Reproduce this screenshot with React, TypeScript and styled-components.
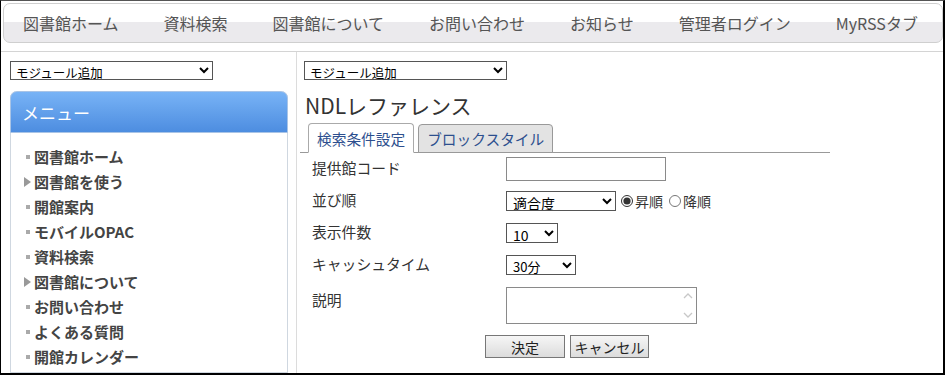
import React from "react";
import styled, { createGlobalStyle } from "styled-components";

const Global = createGlobalStyle`
  html, body { margin: 0; padding: 0; background: #fff; overflow: hidden; }
  body { font-family: "Noto Sans CJK JP", "Noto Sans", sans-serif; }
  * { box-sizing: border-box; }
`;

const Frame = styled.div`
  width: 945px;
  height: 375px;
  border-top: 1px solid #555;
  border-left: 1px solid #000;
  border-right: 2px solid #000;
  border-bottom: 2px solid #000;
  overflow: hidden;
  display: flex;
  flex-direction: column;
`;

const NavBar = styled.nav`
  margin: 2px 0 0 2px;
  height: 40px;
  border: 1px solid #cfcfcf;
  border-radius: 7px;
  background: linear-gradient(#ffffff 0, #ffffff 48%, #ebeaed 48%, #ebeaed 100%);
  display: flex;
  align-items: center;
  padding-left: 19px;
  gap: 45px;
  flex-shrink: 0;
`;

const NavItem = styled.a`
  font-size: 16px;
  color: #555;
  text-decoration: none;
  white-space: nowrap;
`;

const Main = styled.div`
  margin-top: 8px;
  border-top: 1px solid #d4d4d4;
  display: flex;
  flex: 1;
  min-height: 0;
`;

const SideColumn = styled.aside`
  width: 296px;
  flex-shrink: 0;
  border-right: 1px solid #dcdcdc;
  padding: 9px 0 0 9px;
  display: flex;
  flex-direction: column;
`;

const ContentColumn = styled.section`
  flex: 1;
  padding: 9px 0 0 3px;
  display: flex;
  flex-direction: column;
`;

const ModuleSelect = styled.select<{ $ml?: number }>`
  width: 203px;
  height: 19px;
  margin-left: ${(p) => p.$ml ?? 0}px;
  font-family: "Noto Sans CJK JP", sans-serif;
  font-size: 12.5px;
  line-height: 15px;
  color: #000;
  border: 1px solid #555;
  border-radius: 0;
  background: #fff;
  padding: 0 1px;
`;

const MenuBox = styled.div`
  margin-top: 11px;
  width: 278px;
  flex: 1;
  border: 1px solid #cfd7e0;
  border-top: none;
  border-radius: 7px 7px 0 0;
  display: flex;
  flex-direction: column;
`;

const MenuHeader = styled.div`
  height: 42px;
  margin: 0 -1px;
  border-radius: 7px 7px 0 0;
  background: linear-gradient(#78b3f6, #4d8de0);
  border: 1px solid #a9c4e6;
  color: #fff;
  font-size: 17px;
  display: flex;
  align-items: center;
  padding-left: 11px;
`;

const MenuList = styled.ul`
  list-style: none;
  margin: 0;
  padding: 11px 0 0 11px;
`;

const MenuItem = styled.li`
  height: 25px;
  display: flex;
  align-items: center;
  font-size: 15px;
  font-weight: bold;
  color: #444;
`;

const Marker = styled.span<{ $arrow?: boolean }>`
  width: 12px;
  display: inline-flex;
  align-items: center;
  justify-content: ${(p) => (p.$arrow ? "flex-start" : "center")};
  padding-left: ${(p) => (p.$arrow ? 2 : 0)}px;
  &::before {
    content: "";
    display: block;
    ${(p) =>
      p.$arrow
        ? `width: 0; height: 0; border-top: 5px solid transparent; border-bottom: 5px solid transparent; border-left: 7px solid #999;`
        : `width: 4px; height: 4px; background: #aaa;`}
  }
`;

const Title = styled.h2`
  margin: 11px 0 4px 5px;
  font-size: 21px;
  line-height: 28px;
  font-weight: normal;
  color: #333;
`;

const TabBar = styled.div`
  width: 530px;
  height: 30px;
  border-bottom: 1px solid #999;
  display: flex;
  align-items: flex-end;
  gap: 4px;
  padding-left: 8px;
`;

const Tab = styled.div<{ $active?: boolean }>`
  height: ${(p) => (p.$active ? 30 : 29)}px;
  margin-bottom: -1px;
  padding: 0 8px;
  border: 1px solid ${(p) => (p.$active ? "#aaa" : "#999")};
  border-bottom: 1px solid ${(p) => (p.$active ? "#fff" : "#999")};
  border-radius: 4px 4px 0 0;
  background: ${(p) => (p.$active ? "#fff" : "#e3e3e3")};
  color: #2d4f8e;
  font-size: 14.7px;
  display: flex;
  align-items: center;
  white-space: nowrap;
`;

const Form = styled.form`
  width: 530px;
  padding-left: 12px;
  display: flex;
  flex-direction: column;
`;

const Row = styled.div<{ $top?: boolean }>`
  height: ${(p) => (p.$top ? 54 : 32)}px;
  display: flex;
  align-items: ${(p) => (p.$top ? "flex-start" : "center")};
  padding-top: ${(p) => (p.$top ? 6 : 0)}px;
`;

const Label = styled.label<{ $pt?: number }>`
  width: 194px;
  flex-shrink: 0;
  font-size: 14.8px;
  color: #333;
  padding-top: ${(p) => p.$pt ?? 0}px;
  padding-bottom: ${(p) => (p.$pt ? 0 : 4)}px;
`;

const TextInput = styled.input`
  width: 160px;
  height: 24px;
  border: 1px solid #8a8a8a;
  border-radius: 0;
  padding: 0 3px;
`;

const FieldSelect = styled.select<{ $w: number; $fs: number }>`
  width: ${(p) => p.$w}px;
  height: 20px;
  font-family: "Noto Sans CJK JP", sans-serif;
  font-size: ${(p) => p.$fs}px;
  color: #000;
  border: 1px solid #555;
  border-radius: 0;
  background: #fff;
  padding: 0 2px;
`;

const RadioGroup = styled.div`
  display: flex;
  align-items: center;
  margin-left: 3px;
  font-size: 14px;
  color: #333;
`;

const Radio = styled.input`
  width: 12px;
  height: 12px;
  margin: 0 2px 0 2px;
  accent-color: #333;
`;

const RadioText = styled.span`
  margin-right: 4px;
`;

const TextAreaWrap = styled.div`
  position: relative;
  width: 191px;
  height: 37px;
`;

const TextArea = styled.textarea`
  width: 191px;
  height: 37px;
  border: 1px solid #8a8a8a;
  border-radius: 0;
  resize: none;
  overflow-y: scroll;
  display: block;
  padding-right: 18px;
`;

const ScrollArrows = styled.svg`
  position: absolute;
  right: 2px;
  top: 3px;
  pointer-events: none;
`;

const ButtonRow = styled.div`
  display: flex;
  justify-content: center;
  gap: 5px;
  padding-right: 8px;
`;

const Button = styled.button<{ $w: number }>`
  width: ${(p) => p.$w}px;
  height: 23px;
  font-family: "Noto Sans CJK JP", sans-serif;
  font-size: 14px;
  color: #222;
  border: 1px solid #777;
  border-radius: 0;
  background: linear-gradient(#f6f6f6, #dcdcdc);
  padding: 0;
`;

const navItems = ["図書館ホーム", "資料検索", "図書館について", "お問い合わせ", "お知らせ", "管理者ログイン", "MyRSSタブ"];

const menuItems: { label: string; arrow?: boolean }[] = [
  { label: "図書館ホーム" },
  { label: "図書館を使う", arrow: true },
  { label: "開館案内" },
  { label: "モバイルOPAC" },
  { label: "資料検索" },
  { label: "図書館について", arrow: true },
  { label: "お問い合わせ" },
  { label: "よくある質問" },
  { label: "開館カレンダー" },
];

export default function App() {
  return (
    <>
      <Global />
      <Frame>
        <NavBar>
          {navItems.map((n) => (
            <NavItem key={n}>{n}</NavItem>
          ))}
        </NavBar>
        <Main>
          <SideColumn>
            <ModuleSelect defaultValue="a">
              <option value="a">モジュール追加</option>
            </ModuleSelect>
            <MenuBox>
              <MenuHeader>メニュー</MenuHeader>
              <MenuList>
                {menuItems.map((m) => (
                  <MenuItem key={m.label}>
                    <Marker $arrow={m.arrow} />
                    {m.label}
                  </MenuItem>
                ))}
              </MenuList>
            </MenuBox>
          </SideColumn>
          <ContentColumn>
            <ModuleSelect $ml={4} defaultValue="a">
              <option value="a">モジュール追加</option>
            </ModuleSelect>
            <Title>NDLレファレンス</Title>
            <TabBar>
              <Tab $active>検索条件設定</Tab>
              <Tab>ブロックスタイル</Tab>
            </TabBar>
            <Form onSubmit={(e) => e.preventDefault()}>
              <Row>
                <Label>提供館コード</Label>
                <TextInput type="text" />
              </Row>
              <Row>
                <Label>並び順</Label>
                <FieldSelect $w={110} $fs={14} defaultValue="a">
                  <option value="a">適合度</option>
                </FieldSelect>
                <RadioGroup>
                  <Radio type="radio" name="order" defaultChecked />
                  <RadioText>昇順</RadioText>
                  <Radio type="radio" name="order" />
                  <RadioText>降順</RadioText>
                </RadioGroup>
              </Row>
              <Row>
                <Label>表示件数</Label>
                <FieldSelect $w={52} $fs={14} defaultValue="10">
                  <option value="10">10</option>
                </FieldSelect>
              </Row>
              <Row>
                <Label>キャッシュタイム</Label>
                <FieldSelect $w={70} $fs={13} defaultValue="30">
                  <option value="30">30分</option>
                </FieldSelect>
              </Row>
              <Row $top>
                <Label $pt={2}>説明</Label>
                <TextAreaWrap>
                  <TextArea />
                  <ScrollArrows width="14" height="31" viewBox="0 0 14 31">
                    <path d="M3 8 L7 4 L11 8" fill="none" stroke="#c8c8c8" strokeWidth="1.3" />
                    <path d="M3 23 L7 27 L11 23" fill="none" stroke="#c8c8c8" strokeWidth="1.3" />
                  </ScrollArrows>
                </TextAreaWrap>
              </Row>
              <ButtonRow>
                <Button type="submit" $w={80}>決定</Button>
                <Button type="button" $w={79}>キャンセル</Button>
              </ButtonRow>
            </Form>
          </ContentColumn>
        </Main>
      </Frame>
    </>
  );
}
